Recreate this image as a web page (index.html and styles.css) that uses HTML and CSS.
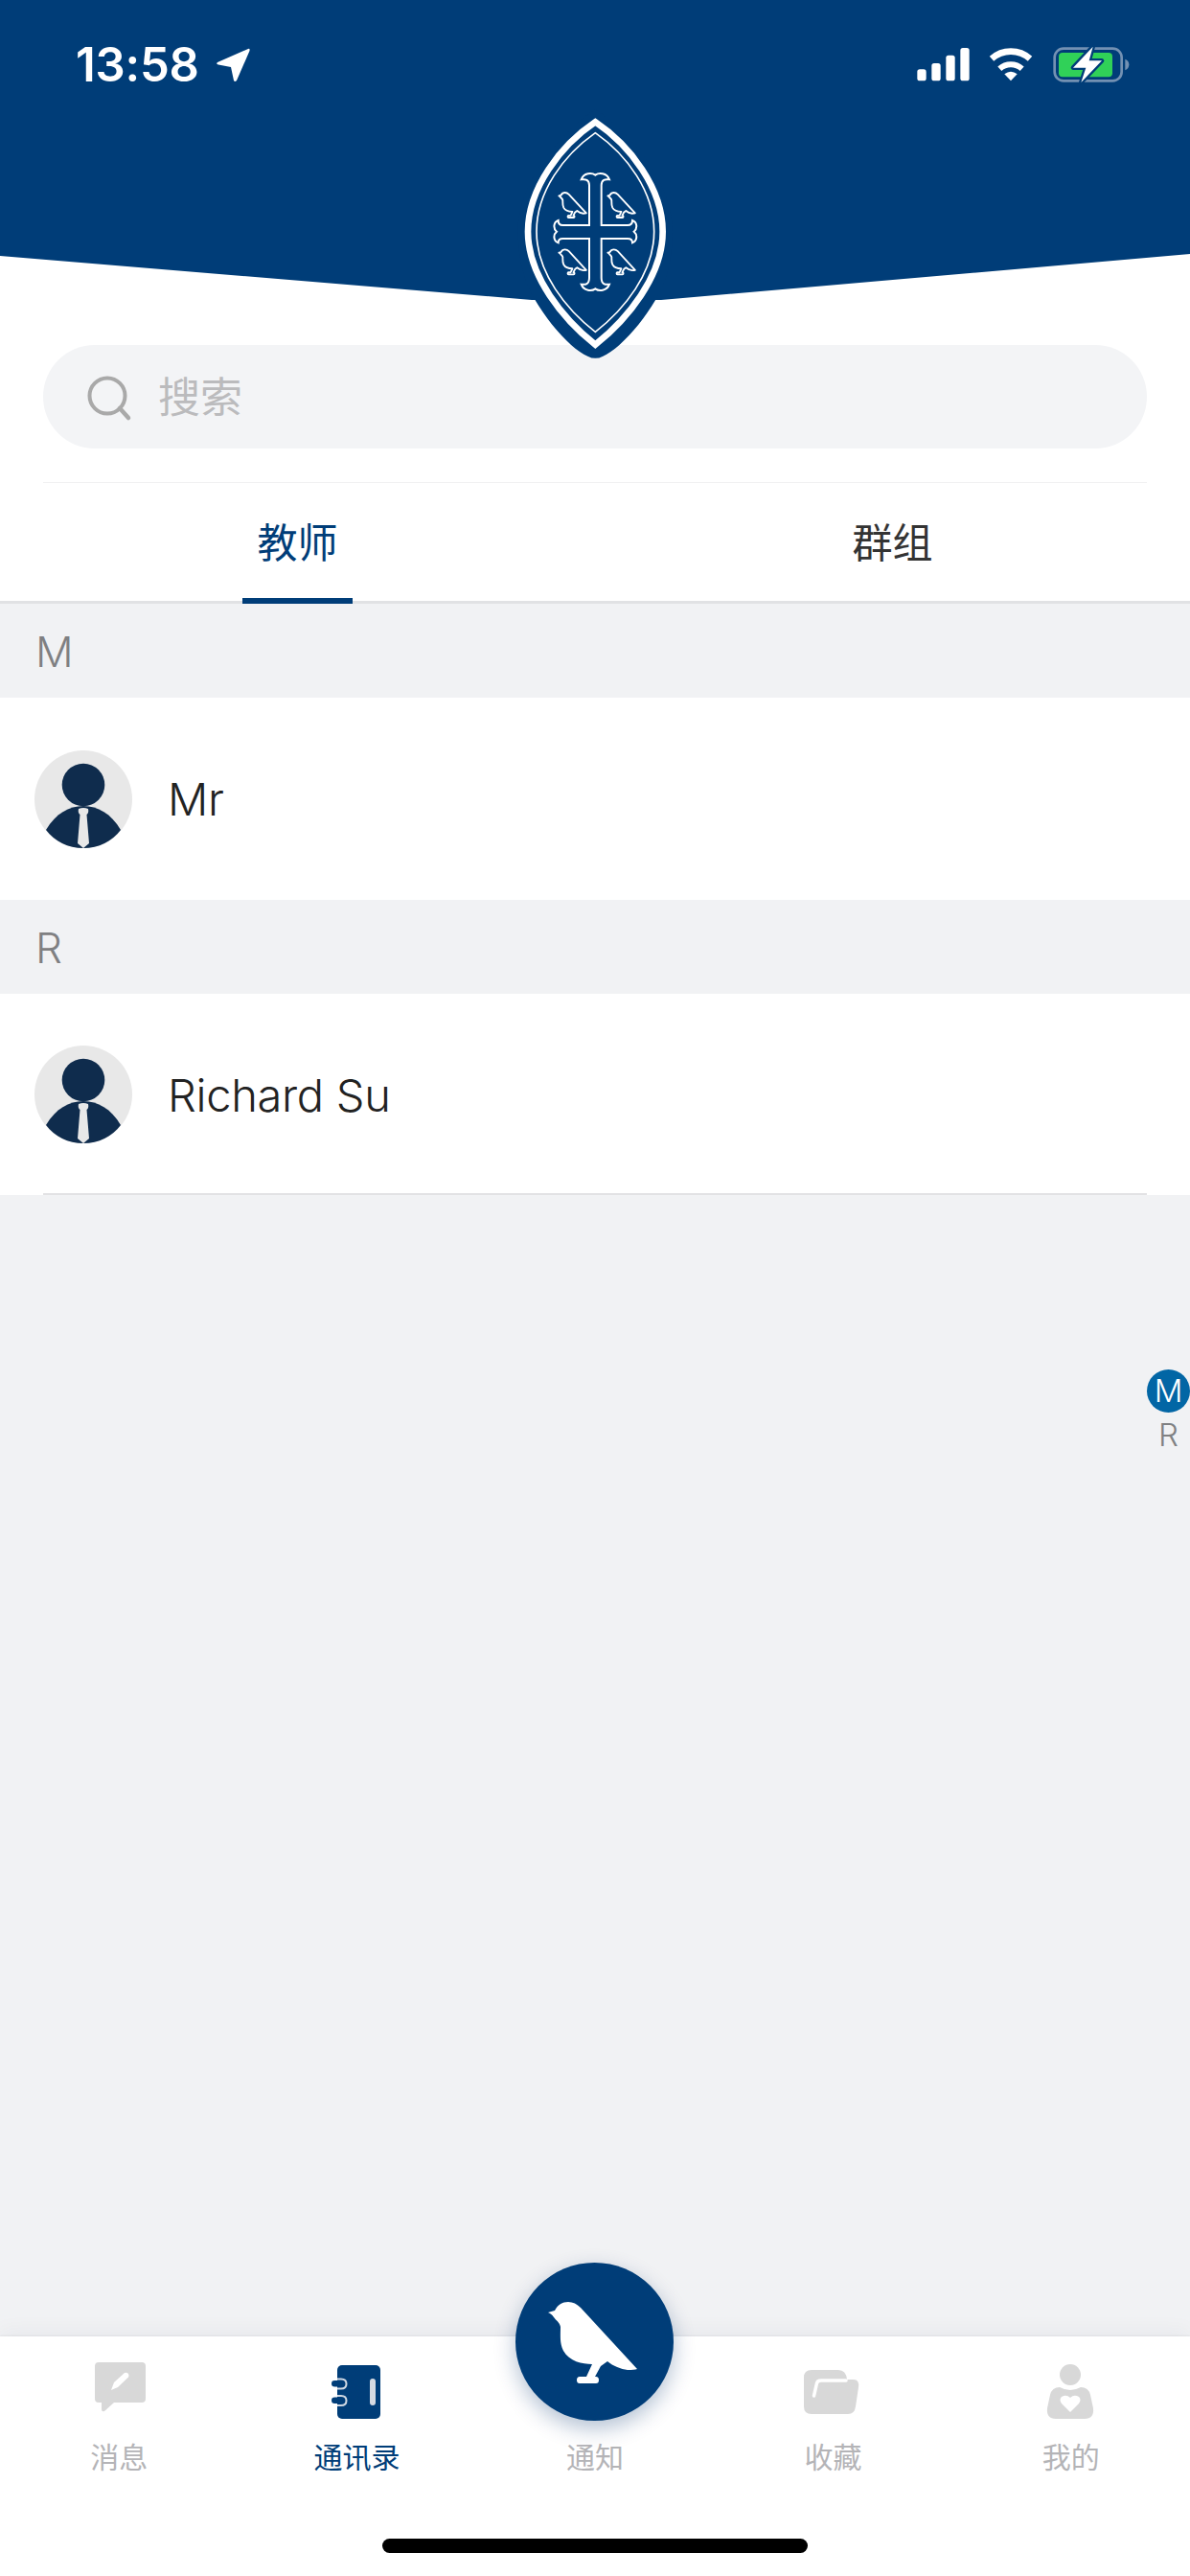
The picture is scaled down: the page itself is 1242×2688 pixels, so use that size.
FILE: index.html
```html
<!DOCTYPE html>
<html lang="zh">
<head>
<meta charset="utf-8">
<title>通讯录</title>
<link rel="stylesheet" href="styles.css">
</head>
<body>
<svg class="defs" width="0" height="0" aria-hidden="true">
  <defs>
    <path id="bird" d="M0 12L7 10C10 4 15 1 21 1C26 1 30 3 34 7L93 71Q90 72 83 72C76 71 68 68 62 63L55 68L49 79L50 79Q53 79 53 82.500Q53 86 50 86L33 86Q30 86 30 82.500Q30 79 33 79L40 79L46 66C36 66 22 63 16 52C12 44 13 36 13 27C12 22 8 20 6 17C4 14 2 13 0 12Z"/>
    <g id="person">
      <circle cx="51" cy="51" r="51" fill="#e8e8e8"/>
      <circle cx="51" cy="36" r="22.300" fill="#0f2c4d"/>
      <path d="M12 83C22 66 36 58 51 58C66 58 80 66 90 83C81 95 67 102 51 102C35 102 21 95 12 83Z" fill="#0f2c4d"/>
      <path d="M46 61Q51 59 56 61Q57 65 54.500 67L57 97L51 102L45 97L47.500 67Q45 65 46 61Z" fill="#e8e8e8"/>
    </g>
  </defs>
</svg>
<div class="page">
  <header class="hero">
    <div class="hero-bg"></div>
    <div class="status">
      <div class="status-left">
        <span class="time">13:58</span>
        <svg class="arrow" width="36" height="36" viewBox="0 0 36 36"><path d="M34 1L2 15Q0 17 3 17.500L16 20L19 34Q20 36 22 34L35.500 3Q36 0 34 1Z" fill="#fff"/></svg>
      </div>
      <svg class="status-right" width="270" height="90" viewBox="0 0 810 270">
        <g fill="#fff">
          <rect x="82" y="157" width="28" height="36" rx="8"/>
          <rect x="127" y="138" width="28" height="55" rx="8"/>
          <rect x="172" y="113" width="28" height="80" rx="8"/>
          <rect x="217" y="90" width="28" height="103" rx="8"/>
          <path d="M375 193L355 172Q375 156 395 172Z"/>
        </g>
        <g fill="none" stroke="#fff">
          <path d="M315 124A90 90 0 0 1 435 124" stroke-width="20"/>
          <path d="M340 155A52 52 0 0 1 410 155" stroke-width="18"/>
        </g>
        <rect x="512" y="92" width="210" height="101" rx="28" fill="none" stroke="#7391b3" stroke-width="8"/>
        <path d="M733 125Q745 130 745 142Q745 155 733 160Z" fill="#7391b3"/>
        <rect x="525" y="105" width="168" height="76" rx="12" fill="#30d158"/>
        <path class="bolt" d="M632 86L570 152L610 152L595 198L660 130L620 130Z"/>
      </svg>
    </div>
    <svg class="crest" width="240" height="290" viewBox="0 0 720 870" aria-label="校徽">
      <path d="M364 42C250 120 122 270 122 425C122 480 130 520 140 560C170 660 280 790 340 815Q364 828 388 815C448 790 558 660 588 560C598 520 606 480 606 425C606 270 478 120 364 42Z" fill="#003d78"/>
      <path d="M364 82C255 155 153 290 153 425C153 565 265 700 364 779C463 700 575 565 575 425C575 290 473 155 364 82Z" fill="none" stroke="#fff" stroke-width="20"/>
      <path d="M364 116C265 185 180 300 180 425C180 555 275 670 364 739C453 670 548 555 548 425C548 300 463 185 364 116Z" fill="none" stroke="#fff" stroke-width="5"/>
      <path d="M364 248C375 240 400 240 408 262C395 260 383 262 383 280L383 405L465 405C478 405 480 395 480 390C495 395 497 415 485 425C497 435 495 455 480 460C480 455 478 447 465 447L383 447L383 570C383 590 395 592 408 590C400 612 375 612 364 604C353 612 328 612 320 590C333 592 345 590 345 570L345 447L262 447C250 447 248 455 248 460C233 455 231 435 243 425C231 415 233 395 248 390C248 395 250 405 262 405L345 405L345 280C345 262 333 260 320 262C328 240 353 240 364 248Z" fill="#003d78" stroke="#fff" stroke-width="6"/>
      <g fill="#003d78" stroke="#fff" stroke-width="6" stroke-linejoin="round">
        <use href="#bird" transform="translate(250 302) scale(.92)"/>
        <use href="#bird" transform="translate(403 302) scale(.92)"/>
        <use href="#bird" transform="translate(250 480) scale(.92)"/>
        <use href="#bird" transform="translate(403 480) scale(.92)"/>
      </g>
    </svg>
  </header>

  <div class="search-wrap">
    <div class="search">
      <svg class="search-icon" width="50" height="50" viewBox="0 0 50 50"><circle cx="23" cy="22" r="18.500" fill="none" stroke="#a9a9a9" stroke-width="4"/><path d="M36 35L45 45" stroke="#a9a9a9" stroke-width="4.500" stroke-linecap="round"/></svg>
      <span class="search-text">搜索</span>
    </div>
  </div>

  <nav class="tabs">
    <div class="tab tab-active"><span>教师</span></div>
    <div class="tab"><span>群组</span></div>
  </nav>

  <main class="list">
    <div class="section-head">M</div>
    <div class="row">
      <svg class="avatar" width="102" height="102" viewBox="0 0 102 102"><use href="#person"/></svg>
      <span class="name">Mr</span>
    </div>
    <div class="section-head">R</div>
    <div class="row row-last">
      <svg class="avatar" width="102" height="102" viewBox="0 0 102 102"><use href="#person"/></svg>
      <span class="name">Richard Su</span>
    </div>
  </main>

  <aside class="index">
    <span class="index-item index-on">M</span>
    <span class="index-item">R</span>
  </aside>

  <footer class="bar">
    <div class="bar-items">
      <div class="item">
        <svg class="item-icon" width="72" height="64" viewBox="0 0 72 64">
          <path d="M15 2H60Q64 2 64 6V40Q64 44 60 44H31L21 53Q18 54 18 51V44H15Q11 44 11 40V6Q11 2 15 2Z" fill="#d8d8d8"/>
          <path d="M28 31L31 23L42 13Q44 12 46 14Q47 16 46 17.500L35 28Z" fill="#fff"/>
        </svg>
        <span class="item-label">消息</span>
      </div>
      <div class="item item-active">
        <svg class="item-icon" width="72" height="64" viewBox="0 0 72 64">
          <rect x="15" y="5" width="45" height="56" rx="5" fill="#003d78"/>
          <rect x="49" y="19" width="6" height="28" rx="3" fill="#d5dae2"/>
          <path d="M15 19.500H19Q24.500 19.500 24.500 24.500Q24.500 29.500 19 29.500H15M15 37H19Q24.500 37 24.500 42Q24.500 47 19 47H15" fill="none" stroke="#cfd8e3" stroke-width="2"/>
          <rect x="9" y="21" width="12" height="6.500" rx="3.250" fill="#003d78"/>
          <rect x="9" y="38.500" width="12" height="6.500" rx="3.250" fill="#003d78"/>
        </svg>
        <span class="item-label">通讯录</span>
      </div>
      <div class="item">
        <div class="item-icon item-blank"></div>
        <span class="item-label">通知</span>
      </div>
      <div class="item">
        <svg class="item-icon" width="72" height="64" viewBox="0 0 72 64">
          <path d="M14 10H42Q50 10 51 20H58Q64 20 63 28L60 48Q59 56 52 56H14Q6 56 6 48V18Q6 10 14 10Z" fill="#d8d8d8"/>
          <path d="M16.500 37L19.500 24Q20 21 24 21H50" fill="none" stroke="#fff" stroke-width="3.500" stroke-linecap="round"/>
        </svg>
        <span class="item-label">收藏</span>
      </div>
      <div class="item">
        <svg class="item-icon" width="72" height="64" viewBox="0 0 72 64">
          <circle cx="35" cy="15" r="11" fill="#d8d8d8"/>
          <path d="M24 28Q35 34 46 28Q54 28 56 36L59 50Q60 61 50 61H20Q10 61 11 50L14 36Q16 28 24 28Z" fill="#d8d8d8"/>
          <path d="M35 54L26 45Q23 41 26 38Q31 35 35 39Q39 35 44 38Q47 41 44 45Z" fill="#fff"/>
        </svg>
        <span class="item-label">我的</span>
      </div>
    </div>
    <div class="home"></div>
    <div class="fab">
      <svg width="94" height="88" viewBox="0 0 94 88"><use href="#bird" fill="#fff"/></svg>
    </div>
  </footer>
</div>
</body>
</html>
```

FILE: styles.css
```css
* { box-sizing: border-box; }
html, body { margin: 0; padding: 0; }
body {
  font-family: Inter, "Noto Sans CJK SC", sans-serif;
  background: #f1f2f4;
}
.defs { position: absolute; }
.page {
  position: relative;
  width: 1242px;
  height: 2688px;
  overflow: hidden;
  display: flex;
  flex-direction: column;
}

/* header */
.hero {
  position: relative;
  height: 360px;
  background: #fff;
  flex: none;
}
.hero-bg {
  position: absolute;
  inset: 0;
  background: #003d78;
  clip-path: polygon(0 0, 1242px 0, 1242px 265px, 690px 313px, 555px 313px, 0 267px);
}
.status {
  position: relative;
  display: flex;
  justify-content: space-between;
  align-items: flex-start;
  padding: 20px 42px 0 79px;
}
.status-left {
  display: flex;
  align-items: center;
  gap: 17px;
  height: 96px;
}
.time {
  color: #fff;
  font-size: 49px;
  font-weight: 600;
  letter-spacing: -0.2px;
  line-height: 96px;
}
.arrow { flex: none; }
.bolt {
  fill: #fff;
  stroke: #003d78;
  stroke-width: 14;
  stroke-linejoin: round;
  paint-order: stroke;
}
.crest {
  position: absolute;
  left: 500px;
  top: 100px;
}

/* search */
.search-wrap {
  flex: none;
  padding: 0 45px;
  background: #fff;
  height: 144px;
}
.search-wrap::after {
  content: "";
  display: block;
  margin-top: 35px;
  height: 1px;
  background: #f1f1f2;
}
.search {
  height: 108px;
  border-radius: 54px;
  background: #f3f4f6;
  display: flex;
  align-items: center;
  gap: 26px;
  padding-left: 44px;
}
.search-icon { flex: none; margin-top: 4px; }
.search-text {
  font-family: "Noto Sans CJK SC", sans-serif;
  font-size: 44px;
  line-height: 54px;
  margin-top: -4px;
  color: #bbbbbd;
}

/* tabs */
.tabs {
  flex: none;
  height: 126px;
  display: flex;
  background: #fff;
  border-bottom: 3px solid #e1e2e4;
}
.tab {
  flex: 1;
  display: flex;
  justify-content: center;
}
.tab span {
  display: block;
  width: 115px;
  height: 126px;
  padding-top: 35px;
  text-align: center;
  font-family: "Noto Sans CJK SC", sans-serif;
  font-size: 42px;
  line-height: 50px;
  color: #333;
}
.tab-active span {
  color: #003d78;
  border-bottom: 6px solid #003d78;
}

/* contact list */
.list { flex: 1; }
.section-head {
  height: 98px;
  padding-left: 37px;
  font-size: 44px;
  font-weight: 300;
  line-height: 100px;
  color: #7f8082;
}
.row {
  height: 211px;
  background: #fff;
  display: flex;
  align-items: center;
  gap: 37px;
  padding: 0 0 0 36px;
}
.row-last {
  height: 210px;
  position: relative;
}
.row-last::after {
  content: "";
  position: absolute;
  left: 45px;
  right: 45px;
  bottom: 0;
  height: 2px;
  background: #e2e2e4;
}
.avatar { flex: none; }
.name {
  font-size: 47px;
  font-weight: 300;
  color: #222;
  letter-spacing: -0.3px;
}

/* alphabet rail */
.index {
  position: absolute;
  left: 1197px;
  top: 1429px;
  width: 45px;
  display: flex;
  flex-direction: column;
  align-items: center;
}
.index-item {
  width: 45px;
  height: 45px;
  border-radius: 50%;
  text-align: center;
  font-size: 33px;
  font-weight: 300;
  line-height: 45px;
  color: #808183;
}
.index-on {
  background: #0266a5;
  color: #fff;
}
.index-item + .index-item { height: 46px; line-height: 46px; }

/* bottom bar */
.bar {
  position: relative;
  flex: none;
  height: 250px;
  background: #fff;
  box-shadow: 0 -1px 2px rgba(0, 0, 0, .05), 0 -6px 20px rgba(0, 20, 60, .045);
}
.bar-items {
  display: flex;
  padding-top: 25px;
}
.item {
  flex: 1;
  display: flex;
  flex-direction: column;
  align-items: center;
  gap: 15px;
}
.item-icon { display: block; flex: none; }
.item-blank { height: 64px; }
.item-label {
  font-family: "Noto Sans CJK SC", sans-serif;
  font-size: 30px;
  line-height: 40px;
  color: #b4b4b7;
}
.item-active .item-label { color: #003d78; }
.home {
  width: 444px;
  height: 15px;
  margin: 67px auto 0;
  border-radius: 8px;
  background: #000;
}
.fab {
  position: absolute;
  left: 538px;
  top: -77px;
  width: 165px;
  height: 165px;
  border-radius: 50%;
  background: #003d78;
  box-shadow: 0 8px 22px rgba(0, 50, 110, .3);
  display: flex;
  align-items: center;
  justify-content: center;
}
.fab svg { margin: 2px 0 0 -4px; }
```
